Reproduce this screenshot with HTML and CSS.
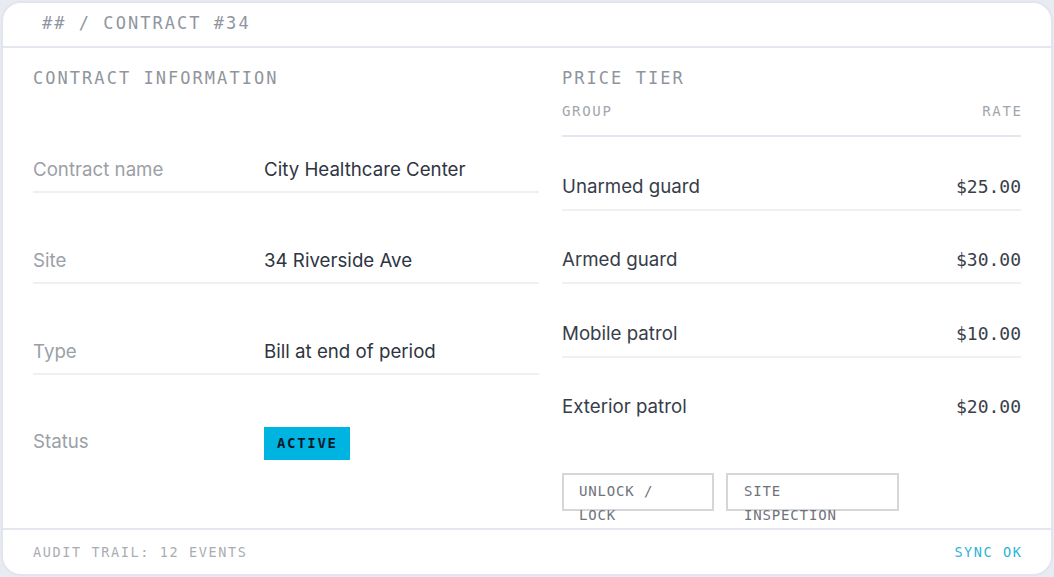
FILE: index.html
```html
<!DOCTYPE html>
<html lang="en">
<head>
<meta charset="utf-8">
<title>Contract #34</title>
<link rel="stylesheet" href="styles.css">
</head>
<body>
<div class="card">
  <header class="card-head">## / CONTRACT #34</header>
  <main class="card-body">
    <section class="info">
      <h2 class="section-title">CONTRACT INFORMATION</h2>
      <div class="field">
        <span class="field-label">Contract name</span>
        <span class="field-value">City Healthcare Center</span>
      </div>
      <div class="field">
        <span class="field-label">Site</span>
        <span class="field-value">34 Riverside Ave</span>
      </div>
      <div class="field">
        <span class="field-label">Type</span>
        <span class="field-value">Bill at end of period</span>
      </div>
      <div class="field field-last">
        <span class="field-label">Status</span>
        <span class="badge">ACTIVE</span>
      </div>
    </section>
    <section class="tiers">
      <h2 class="section-title">PRICE TIER</h2>
      <div class="tier-head">
        <span>GROUP</span>
        <span>RATE</span>
      </div>
      <div class="tier">
        <span class="tier-name">Unarmed guard</span>
        <span class="tier-rate">$25.00</span>
      </div>
      <div class="tier">
        <span class="tier-name">Armed guard</span>
        <span class="tier-rate">$30.00</span>
      </div>
      <div class="tier">
        <span class="tier-name">Mobile patrol</span>
        <span class="tier-rate">$10.00</span>
      </div>
      <div class="tier tier-last">
        <span class="tier-name">Exterior patrol</span>
        <span class="tier-rate">$20.00</span>
      </div>
      <div class="actions">
        <button class="action action-lock">UNLOCK / LOCK</button>
        <button class="action action-site">SITE INSPECTION</button>
      </div>
    </section>
  </main>
  <footer class="card-foot">
    <span>AUDIT TRAIL: 12 EVENTS</span>
    <span class="sync">SYNC OK</span>
  </footer>
</div>
</body>
</html>
```

FILE: styles.css
```css
* { box-sizing: border-box; }

html, body {
  margin: 0;
  padding: 0;
}

body {
  background: #e8ebf1;
  font-family: Inter, "Noto Sans", sans-serif;
}

.card {
  margin: 1px;
  width: 1052px;
  height: 575px;
  background: #ffffff;
  border: 2px solid #e2e5ec;
  border-radius: 20px;
  display: flex;
  flex-direction: column;
  overflow: hidden;
}

.card-head {
  height: 45px;
  padding: 10px 0 0 39px;
  border-bottom: 2px solid #e4e7ee;
  font-family: "DejaVu Sans Mono", monospace;
  font-size: 17px;
  line-height: 20px;
  letter-spacing: 0.12em;
  color: #9095a0;
}

.card-body {
  flex: 1;
  padding: 20px 30px 0 30px;
  display: grid;
  grid-template-columns: 506px 1fr;
  column-gap: 23px;
  min-height: 0;
}

.section-title {
  margin: 0;
  font-family: "DejaVu Sans Mono", monospace;
  font-weight: normal;
  font-size: 17px;
  line-height: 20px;
  letter-spacing: 0.12em;
  color: #90959c;
}

.info .section-title { margin-bottom: 14px; }

.field {
  height: 91px;
  padding-top: 58px;
  border-bottom: 2px solid #eef0f3;
  display: grid;
  grid-template-columns: 231px 1fr;
  align-items: baseline;
  font-size: 18.7px;
  line-height: 20px;
}

.field-last {
  border-bottom-color: transparent;
  padding-top: 52px;
}

.field-label { color: #9ba0a7; }

.field-value { color: #2e3542; }

.badge {
  justify-self: start;
  background: #00b4e1;
  color: #0b1a2b;
  font-family: "DejaVu Sans Mono", monospace;
  font-weight: bold;
  font-size: 14px;
  letter-spacing: 0.12em;
  line-height: 33px;
  height: 33px;
  padding: 0 12px 0 13px;
}

.tier-head {
  margin-top: 15px;
  height: 34px;
  display: flex;
  justify-content: space-between;
  border-bottom: 2px solid #e3e6ec;
  font-family: "DejaVu Sans Mono", monospace;
  font-size: 14px;
  line-height: 16px;
  letter-spacing: 0.12em;
  color: #a2a6ad;
}

.tier-head span:last-child { margin-right: -0.12em; }

.tier {
  height: 73.5px;
  padding-bottom: 12px;
  display: flex;
  justify-content: space-between;
  align-items: flex-end;
  border-bottom: 2px solid #eef0f3;
  line-height: 20px;
}

.tier-last { border-bottom-color: transparent; }

.tier-name {
  font-size: 18.7px;
  color: #373d49;
}

.tier-rate {
  font-family: "DejaVu Sans Mono", monospace;
  font-size: 18px;
  color: #3a404b;
}

.actions {
  margin-top: 42px;
  display: flex;
  gap: 12px;
}

.action {
  height: 38px;
  margin: 0;
  padding: 4px 20px 0 15px;
  border: 2px solid #d5d6d9;
  background: #ffffff;
  text-align: left;
  display: block;
  font-family: "DejaVu Sans Mono", monospace;
  font-size: 14px;
  line-height: 24px;
  letter-spacing: 0.06em;
  color: #6e737a;
  border-radius: 0;
}

.action-lock { width: 152px; }

.action-site { width: 173px; padding-left: 16px; }

.card-foot {
  height: 46px;
  padding: 0 30px;
  border-top: 2px solid #e4e7ee;
  display: flex;
  justify-content: space-between;
  align-items: center;
  font-family: "DejaVu Sans Mono", monospace;
  font-size: 13.5px;
  letter-spacing: 0.12em;
  color: #a9adb3;
}

.sync {
  color: #2bb4d8;
  margin-right: -0.12em;
}
```
